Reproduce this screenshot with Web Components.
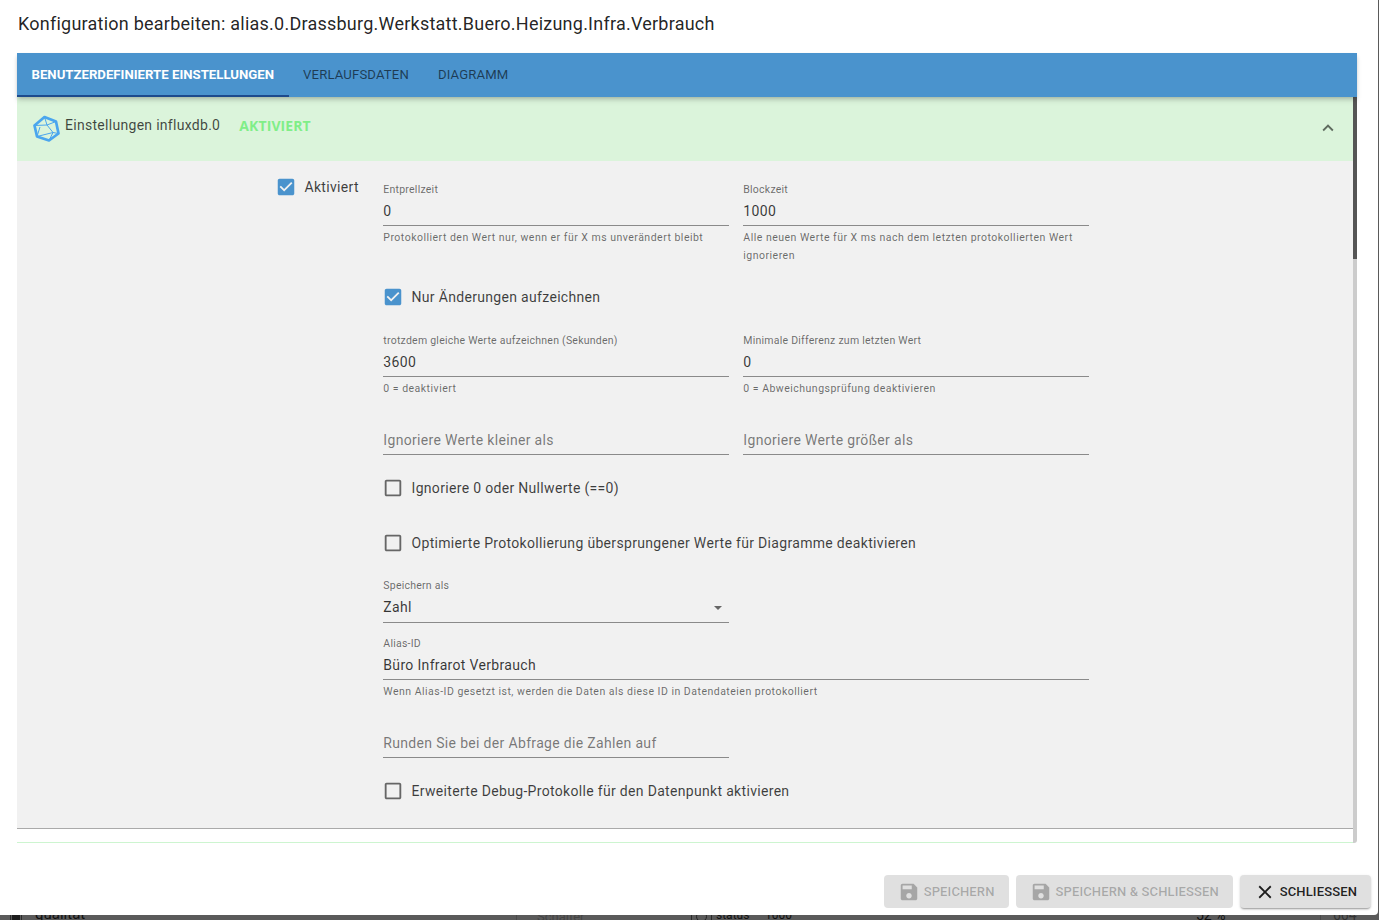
<!DOCTYPE html>
<html lang="de"><head><meta charset="utf-8"><title>Konfiguration</title>
<style>
html,body{margin:0;padding:0;height:920px;overflow:hidden;background:#555;font-family:Roboto,"Liberation Sans",sans-serif}
</style></head><body>
<template id="t-backdrop"><style>
:host{display:block;position:absolute;left:0;top:0;width:1379px;height:920px;background:#5a5a5a;overflow:hidden;color:#111;font:15px/20px Roboto,sans-serif}
span{position:absolute;top:904px;white-space:nowrap}
i{position:absolute;top:905px;width:1px;height:15px;background:#2a2a2a}
b{position:absolute;left:12px;top:915px;width:8px;height:5px;background:#1c1c1c}
u{position:absolute;left:696px;top:911px;width:9px;height:9px;border:1px solid #222;border-radius:50%}
</style><b></b><i style="left:10px"></i><i style="left:21px"></i><span style="left:35px;font-size:15px">qualität</span><i style="left:516px;background:#4a4a4a"></i><span style="left:537px;font-size:13px;top:907px;color:#444">Schalter</span><i style="left:691px"></i><u></u><i style="left:711px"></i><span style="left:716px;font-size:12px;top:905px">status</span><span style="left:765px;font-size:12px;top:905px">1000</span><span style="left:1196px;font-size:14px;top:905px">52 %</span><i style="left:1320px;background:#4a4a4a"></i><span style="left:1333px;font-size:14px;top:905px;color:#333">664</span></template>

<template id="t-dialog"><style>
:host{display:flex;flex-direction:column;position:relative;box-sizing:border-box;width:1378px;height:915px;background:#fff;border-bottom-right-radius:4px;overflow:hidden}
h2{margin:0;height:53px;box-sizing:border-box;padding:13px 0 0 18px;font:400 18px/22px Roboto,sans-serif;letter-spacing:.235px;color:rgba(0,0,0,.87);white-space:nowrap}
.body{margin:0 21px 0 17px;height:790px;display:flex;flex-direction:column;position:relative}
.scroll{flex:1;min-height:0;display:flex;overflow:hidden}
.content{flex:1;min-width:0;overflow:hidden}
.bar{width:4px;flex:none;background:#ccc;border-bottom-right-radius:3px}
.thumb{height:162px;background:#555}
.foot{flex:1;display:flex;justify-content:flex-end;align-items:flex-start;gap:7px;padding:32px 7px 0 0}
</style><h2><slot name="title"></slot></h2>
<div class="body"><slot name="tabs"></slot>
<div class="scroll"><div class="content"><slot></slot></div><div class="bar"><div class="thumb"></div></div></div></div>
<div class="foot"><slot name="actions"></slot></div></template>

<template id="t-tabs"><style>
:host{display:flex;height:44px;background:#4a93cd;box-shadow:0 2px 4px -1px rgba(0,0,0,.2),0 4px 5px 0 rgba(0,0,0,.1);position:relative;z-index:1;flex:none}
</style><slot></slot></template>

<template id="t-tab"><style>
:host{display:flex;align-items:center;box-sizing:border-box;height:44px;padding:2px 14.5px 0;font:400 13.15px/16px Roboto,sans-serif;letter-spacing:.14px;color:rgba(0,0,0,.6);white-space:nowrap;border-bottom:2px solid transparent}
:host([active]){color:#fff;border-bottom-color:#1d4a8c;font-weight:700;font-size:13.2px;letter-spacing:0}
</style><slot></slot></template>

<template id="t-head"><style>
:host{display:flex;align-items:flex-start;height:64px;background:#dbf4db;position:relative}
svg.logo{width:28px;height:28px;margin:18px 4px 0 16px;flex:none}
.t{margin-top:18px;font:400 14px/20px Roboto,sans-serif;letter-spacing:.29px;color:rgba(0,0,0,.72);white-space:nowrap}
.a{margin:19px 0 0 19px;font:700 14px/20px "Open Sans",Roboto,sans-serif;color:#80ee88;white-space:nowrap;letter-spacing:.1px}
svg.c{position:absolute;right:14px;top:20px;width:22px;height:22px;fill:#5f6b5f}
</style><svg class="logo" viewBox="0 0 28 28" fill="none" stroke="#4ba6ee"><path stroke-width="2.7" stroke-linejoin="round" d="M11.5 2 23 6.5 25.5 18.5 16 25.5 4 21.5 1.5 10.5Z"/><path stroke-width="1" d="M11.5 2 14 10 23 6.5M14 10 1.5 10.5M14 10 20 17.5 4 21.5 7 12M20 17.5 25.5 18.5M20 17.5 16 25.5"/></svg><span class="t"><slot></slot></span><span class="a"><slot name="status"></slot></span><svg class="c" viewBox="0 0 24 24"><path d="M12 8l-6 6 1.41 1.41L12 10.83l4.59 4.58L18 14z"/></svg></template>

<template id="t-check"><style>
:host{display:flex;align-items:center;height:24px;font:400 14px/24px Roboto,sans-serif;letter-spacing:.32px;color:rgba(0,0,0,.75);white-space:nowrap}
svg{width:22px;height:22px;margin-left:-1px;margin-right:7.5px;fill:#666;flex:none}
:host([checked]) svg{fill:#4a93cd}
</style><svg viewBox="0 0 24 24"><path></path></svg><slot></slot></template>

<template id="t-field"><style>
:host{display:block;width:346px;font-family:Roboto,sans-serif}
:host([wide]){width:706px}
.l{height:14px;padding-left:.3px;font:400 10.5px/16px Roboto,sans-serif;letter-spacing:.24px;color:rgba(0,0,0,.58);white-space:nowrap}
.v{height:29px;padding-left:.3px;border-bottom:1px solid #8a8a8a;font:400 14px/31px Roboto,sans-serif;letter-spacing:.33px;color:rgba(0,0,0,.78);white-space:nowrap;position:relative}
:host([select]) .v{height:30px}
:host([placeholder]) .v{color:rgba(0,0,0,.52)}
.h{margin:3px 0 -1px;padding-left:.3px;font:400 10.5px/18px Roboto,sans-serif;letter-spacing:.49px;color:rgba(0,0,0,.58)}
.h:empty{display:none}
.ar{position:absolute;right:7px;top:14px;width:0;height:0;border:4px solid transparent;border-top-color:#666;border-bottom:0}
</style><div class="l"></div><div class="v"><slot></slot></div><div class="h"></div></template>

<template id="t-row"><style>
:host{display:flex;gap:14px}
</style><slot></slot></template>

<template id="t-form"><style>
:host{display:flex;background:#f1f1f1;border-bottom:1px solid #aaa;height:668px;box-sizing:border-box;overflow:hidden}
.left{width:107px;margin-left:259px;padding-top:14px;flex:none}
.right{padding-top:21px;width:706px}
</style><div class="left"><slot name="left"></slot></div><div class="right"><slot></slot></div></template>

<template id="t-next"><style>
:host{display:block;height:13px;background:#fff;border-bottom:1px solid #cdf5d0;box-sizing:content-box}
</style></template>

<template id="t-btn"><style>
:host{display:inline-flex;align-items:center;box-sizing:border-box;height:33px;padding:0 14px;background:#e0e0e0;border-radius:4px;font:500 13px/16px Roboto,sans-serif;letter-spacing:.13px;color:rgba(0,0,0,.26);white-space:nowrap}
:host([on]){color:rgba(0,0,0,.87);box-shadow:0 2px 2px -1px rgba(0,0,0,.35),0 1px 3px rgba(0,0,0,.12)}
svg{width:22px;height:22px;margin-right:4px;fill:rgba(0,0,0,.26);flex:none}
:host([on]) svg{fill:rgba(0,0,0,.87)}
</style><svg viewBox="0 0 24 24"><path></path></svg><slot></slot></template>

<cfg-backdrop></cfg-backdrop>
<cfg-dialog>
  <span slot="title">Konfiguration bearbeiten: alias.0.Drassburg.Werkstatt.Buero.Heizung.Infra.Verbrauch</span>
  <cfg-tabs slot="tabs">
    <cfg-tab active>BENUTZERDEFINIERTE EINSTELLUNGEN</cfg-tab>
    <cfg-tab>VERLAUFSDATEN</cfg-tab>
    <cfg-tab>DIAGRAMM</cfg-tab>
  </cfg-tabs>
  <cfg-head>Einstellungen influxdb.0<span slot="status">AKTIVIERT</span></cfg-head>
  <cfg-form>
    <cfg-check slot="left" checked>Aktiviert</cfg-check>
    <cfg-row>
      <cfg-field label="Entprellzeit" help="Protokolliert den Wert nur, wenn er für X ms unverändert bleibt">0</cfg-field>
      <cfg-field label="Blockzeit" help="Alle neuen Werte für X ms nach dem letzten protokollierten Wert ignorieren">1000</cfg-field>
    </cfg-row>
    <cfg-check checked style="margin-top:21px">Nur Änderungen aufzeichnen</cfg-check>
    <cfg-row style="margin-top:24px">
      <cfg-field label="trotzdem gleiche Werte aufzeichnen (Sekunden)" help="0 = deaktiviert">3600</cfg-field>
      <cfg-field label="Minimale Differenz zum letzten Wert" help="0 = Abweichungsprüfung deaktivieren">0</cfg-field>
    </cfg-row>
    <cfg-row style="margin-top:14px">
      <cfg-field placeholder>Ignoriere Werte kleiner als</cfg-field>
      <cfg-field placeholder>Ignoriere Werte größer als</cfg-field>
    </cfg-row>
    <cfg-check style="margin-top:21px">Ignoriere 0 oder Nullwerte (==0)</cfg-check>
    <cfg-check style="margin-top:31px">Optimierte Protokollierung übersprungener Werte für Diagramme deaktivieren</cfg-check>
    <cfg-field select label="Speichern als" style="margin-top:23px">Zahl</cfg-field>
    <cfg-field wide label="Alias-ID" help="Wenn Alias-ID gesetzt ist, werden die Daten als diese ID in Datendateien protokolliert" style="margin-top:13px">Büro Infrarot Verbrauch</cfg-field>
    <cfg-field placeholder style="margin-top:14px">Runden Sie bei der Abfrage die Zahlen auf</cfg-field>
    <cfg-check style="margin-top:21px">Erweiterte Debug-Protokolle für den Datenpunkt aktivieren</cfg-check>
  </cfg-form>
  <cfg-next></cfg-next>
  <cfg-btn slot="actions" icon="save">SPEICHERN</cfg-btn>
  <cfg-btn slot="actions" icon="save">SPEICHERN &amp; SCHLIESSEN</cfg-btn>
  <cfg-btn slot="actions" icon="close" on>SCHLIESSEN</cfg-btn>
</cfg-dialog>
<script>
const P={save:"M17 3H5c-1.11 0-2 .9-2 2v14c0 1.1.89 2 2 2h14c1.1 0 2-.9 2-2V7l-4-4zm-5 16c-1.66 0-3-1.34-3-3s1.34-3 3-3 3 1.34 3 3-1.34 3-3 3zm3-10H5V5h10v4z",
close:"M19 6.41L17.59 5 12 10.59 6.41 5 5 6.41 10.59 12 5 17.59 6.41 19 12 13.41 17.59 19 19 17.59 13.41 12z",
on:"M19 3H5c-1.11 0-2 .9-2 2v14c0 1.1.89 2 2 2h14c1.11 0 2-.9 2-2V5c0-1.1-.89-2-2-2zm-9 14l-5-5 1.41-1.41L10 14.17l7.59-7.59L19 8l-9 9z",
off:"M19 5v14H5V5h14m0-2H5c-1.1 0-2 .9-2 2v14c0 1.1.9 2 2 2h14c1.1 0 2-.9 2-2V5c0-1.1-.9-2-2-2z"};
function def(name,tid,init){customElements.define(name,class extends HTMLElement{constructor(){super();this.attachShadow({mode:"open"}).appendChild(document.getElementById(tid).content.cloneNode(true))}connectedCallback(){init&&init(this,this.shadowRoot)}})}
def("cfg-backdrop","t-backdrop");def("cfg-dialog","t-dialog");def("cfg-tabs","t-tabs");def("cfg-tab","t-tab");def("cfg-head","t-head");def("cfg-row","t-row");def("cfg-form","t-form");def("cfg-next","t-next");
def("cfg-check","t-check",(e,s)=>{s.querySelector("path").setAttribute("d",e.hasAttribute("checked")?P.on:P.off)});
def("cfg-btn","t-btn",(e,s)=>{s.querySelector("path").setAttribute("d",P[e.getAttribute("icon")])});
def("cfg-field","t-field",(e,s)=>{s.querySelector(".l").textContent=e.getAttribute("label")||"";s.querySelector(".h").textContent=e.getAttribute("help")||"";if(e.hasAttribute("select")){const a=document.createElement("div");a.className="ar";s.querySelector(".v").appendChild(a)}});
</script>
</body></html>
